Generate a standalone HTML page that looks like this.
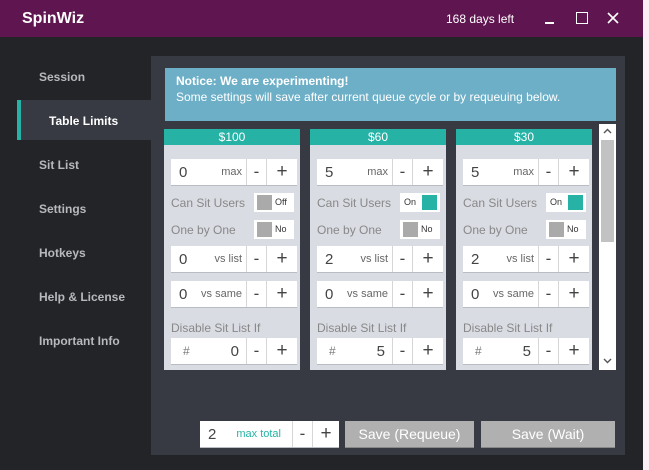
<!DOCTYPE html><html><head><style>
*{margin:0;padding:0;box-sizing:border-box}
body{width:649px;height:470px;background:#fbeef5;font-family:"Liberation Sans",sans-serif;position:relative;overflow:hidden}
.win{position:absolute;left:0;top:0;width:643px;height:470px;background:#232427}
.title{position:absolute;left:0;top:0;width:643px;height:37px;background:#5f1650;color:#fff}
.abs{position:absolute}
.nav{position:absolute;left:39px;color:#b8b9bd;font-size:12px;font-weight:bold}
.panel{position:absolute;left:151px;top:56px;width:474px;height:399px;background:#373a43}
.notice{position:absolute;left:165px;top:68px;width:451px;height:53px;background:#6dafc7;color:#fff;font-size:12px;padding:5px 11px;line-height:16px}
.col{position:absolute;top:129px;width:136px;height:241px;background:#d9dce3}
.hd{height:16px;background:#26b3a6;color:#fff;font-size:12px;text-align:center;line-height:16px}
.row{position:absolute;left:7px;width:126px;height:27px;background:#fff;border-bottom:1px solid #b9bcc3;font-size:15px;color:#444}
.row .v{position:absolute;left:8px;top:5px}
.row .l{position:absolute;right:55px;top:7px;font-size:11px;color:#666}
.row .m{position:absolute;left:75px;top:0;width:20px;height:26px;border-left:1px solid #d6d6d6;text-align:center;line-height:25px;font-size:17px}
.row .p{position:absolute;left:95px;top:0;width:31px;height:26px;border-left:1px solid #d6d6d6;text-align:center;line-height:25px;font-size:19px}
.lab{position:absolute;left:7px;font-size:12px;color:#888}
.tg{position:absolute;left:90px;width:40px;height:19px;background:#fff;font-size:9px;color:#333}
.tg .b{position:absolute;left:3px;top:2px;width:15px;height:15px;background:#aaa}
.tg .t{position:absolute;left:21px;top:4px}
.tg.on .b{left:22px;background:#26b3a6}.tg.on .t{left:4px}
.btn{position:absolute;top:421px;height:27px;background:#b0b0b0;color:#fff;font-size:14px;text-align:center;line-height:27px;border-bottom:1px solid #888}
</style></head><body><div class="win">
<div class="title"><div class="abs" style="left:22px;top:10px;font-size:16px;font-weight:bold">SpinWiz</div>
<div class="abs" style="left:446px;top:12px;font-size:12px">168 days left</div>
<div class="abs" style="left:545px;top:22px;width:9px;height:2px;background:#fff"></div>
<div class="abs" style="left:576px;top:12px;width:12px;height:12px;border:1.5px solid #fff"></div>
<svg class="abs" style="left:607px;top:12px" width="12" height="12"><path d="M1 1L11 11M11 1L1 11" stroke="#fff" stroke-width="1.6"/></svg></div>
<div class="abs" style="left:17px;top:100px;width:134px;height:40px;background:#373a43;border-left:4px solid #26b3a6"></div>
<div class="nav" style="top:70px">Session</div>
<div class="nav" style="top:114px;left:49px;color:#fff">Table Limits</div>
<div class="nav" style="top:158px">Sit List</div>
<div class="nav" style="top:202px">Settings</div>
<div class="nav" style="top:246px">Hotkeys</div>
<div class="nav" style="top:290px">Help &amp; License</div>
<div class="nav" style="top:334px">Important Info</div>
<div class="panel"></div>
<div class="notice"><b>Notice: We are experimenting!</b><br>Some settings will save after current queue cycle or by requeuing below.</div>

<div class="col" style="left:164px"><div class="hd">$100</div>
<div class="row" style="top:30px"><span class="v">0</span><span class="l">max</span><span class="m">-</span><span class="p">+</span></div>
<div class="lab" style="top:67px">Can Sit Users</div><div class="tg" style="top:64px"><div class="b"></div><span class="t">Off</span></div>
<div class="lab" style="top:94px">One by One</div><div class="tg" style="top:91px"><div class="b"></div><span class="t">No</span></div>
<div class="row" style="top:117px"><span class="v">0</span><span class="l">vs list</span><span class="m">-</span><span class="p">+</span></div>
<div class="row" style="top:152px"><span class="v">0</span><span class="l">vs same</span><span class="m">-</span><span class="p">+</span></div>
<div class="lab" style="top:192px">Disable Sit List If</div>
<div class="row" style="top:209px"><span class="v" style="left:12px;font-size:12px;top:6px;color:#777">#</span><span class="l" style="font-size:15px;top:5px;right:58px;color:#444">0</span><span class="m">-</span><span class="p">+</span></div></div>

<div class="col" style="left:310px"><div class="hd">$60</div>
<div class="row" style="top:30px"><span class="v">5</span><span class="l">max</span><span class="m">-</span><span class="p">+</span></div>
<div class="lab" style="top:67px">Can Sit Users</div><div class="tg on" style="top:64px"><div class="b"></div><span class="t">On</span></div>
<div class="lab" style="top:94px">One by One</div><div class="tg" style="top:91px"><div class="b"></div><span class="t">No</span></div>
<div class="row" style="top:117px"><span class="v">2</span><span class="l">vs list</span><span class="m">-</span><span class="p">+</span></div>
<div class="row" style="top:152px"><span class="v">0</span><span class="l">vs same</span><span class="m">-</span><span class="p">+</span></div>
<div class="lab" style="top:192px">Disable Sit List If</div>
<div class="row" style="top:209px"><span class="v" style="left:12px;font-size:12px;top:6px;color:#777">#</span><span class="l" style="font-size:15px;top:5px;right:58px;color:#444">5</span><span class="m">-</span><span class="p">+</span></div></div>

<div class="col" style="left:456px"><div class="hd">$30</div>
<div class="row" style="top:30px"><span class="v">5</span><span class="l">max</span><span class="m">-</span><span class="p">+</span></div>
<div class="lab" style="top:67px">Can Sit Users</div><div class="tg on" style="top:64px"><div class="b"></div><span class="t">On</span></div>
<div class="lab" style="top:94px">One by One</div><div class="tg" style="top:91px"><div class="b"></div><span class="t">No</span></div>
<div class="row" style="top:117px"><span class="v">2</span><span class="l">vs list</span><span class="m">-</span><span class="p">+</span></div>
<div class="row" style="top:152px"><span class="v">0</span><span class="l">vs same</span><span class="m">-</span><span class="p">+</span></div>
<div class="lab" style="top:192px">Disable Sit List If</div>
<div class="row" style="top:209px"><span class="v" style="left:12px;font-size:12px;top:6px;color:#777">#</span><span class="l" style="font-size:15px;top:5px;right:58px;color:#444">5</span><span class="m">-</span><span class="p">+</span></div></div>

<div class="abs" style="left:599px;top:124px;width:17px;height:246px;background:#fff"></div>
<div class="abs" style="left:601px;top:140px;width:13px;height:102px;background:#c2c2c2"></div>
<svg class="abs" style="left:603px;top:128px" width="9" height="6"><path d="M1 5L4.5 1.5L8 5" stroke="#555" stroke-width="1.4" fill="none"/></svg>
<svg class="abs" style="left:603px;top:358px" width="9" height="6"><path d="M1 1L4.5 4.5L8 1" stroke="#555" stroke-width="1.4" fill="none"/></svg>

<div class="row" style="left:200px;top:421px;width:139px"><span class="v">2</span><span class="l" style="right:58px;color:#26b3a6">max total</span><span class="m" style="left:92px">-</span><span class="p" style="left:112px;width:27px">+</span></div>
<div class="btn" style="left:345px;width:129px">Save (Requeue)</div>
<div class="btn" style="left:481px;width:134px">Save (Wait)</div>
</div></body></html>
